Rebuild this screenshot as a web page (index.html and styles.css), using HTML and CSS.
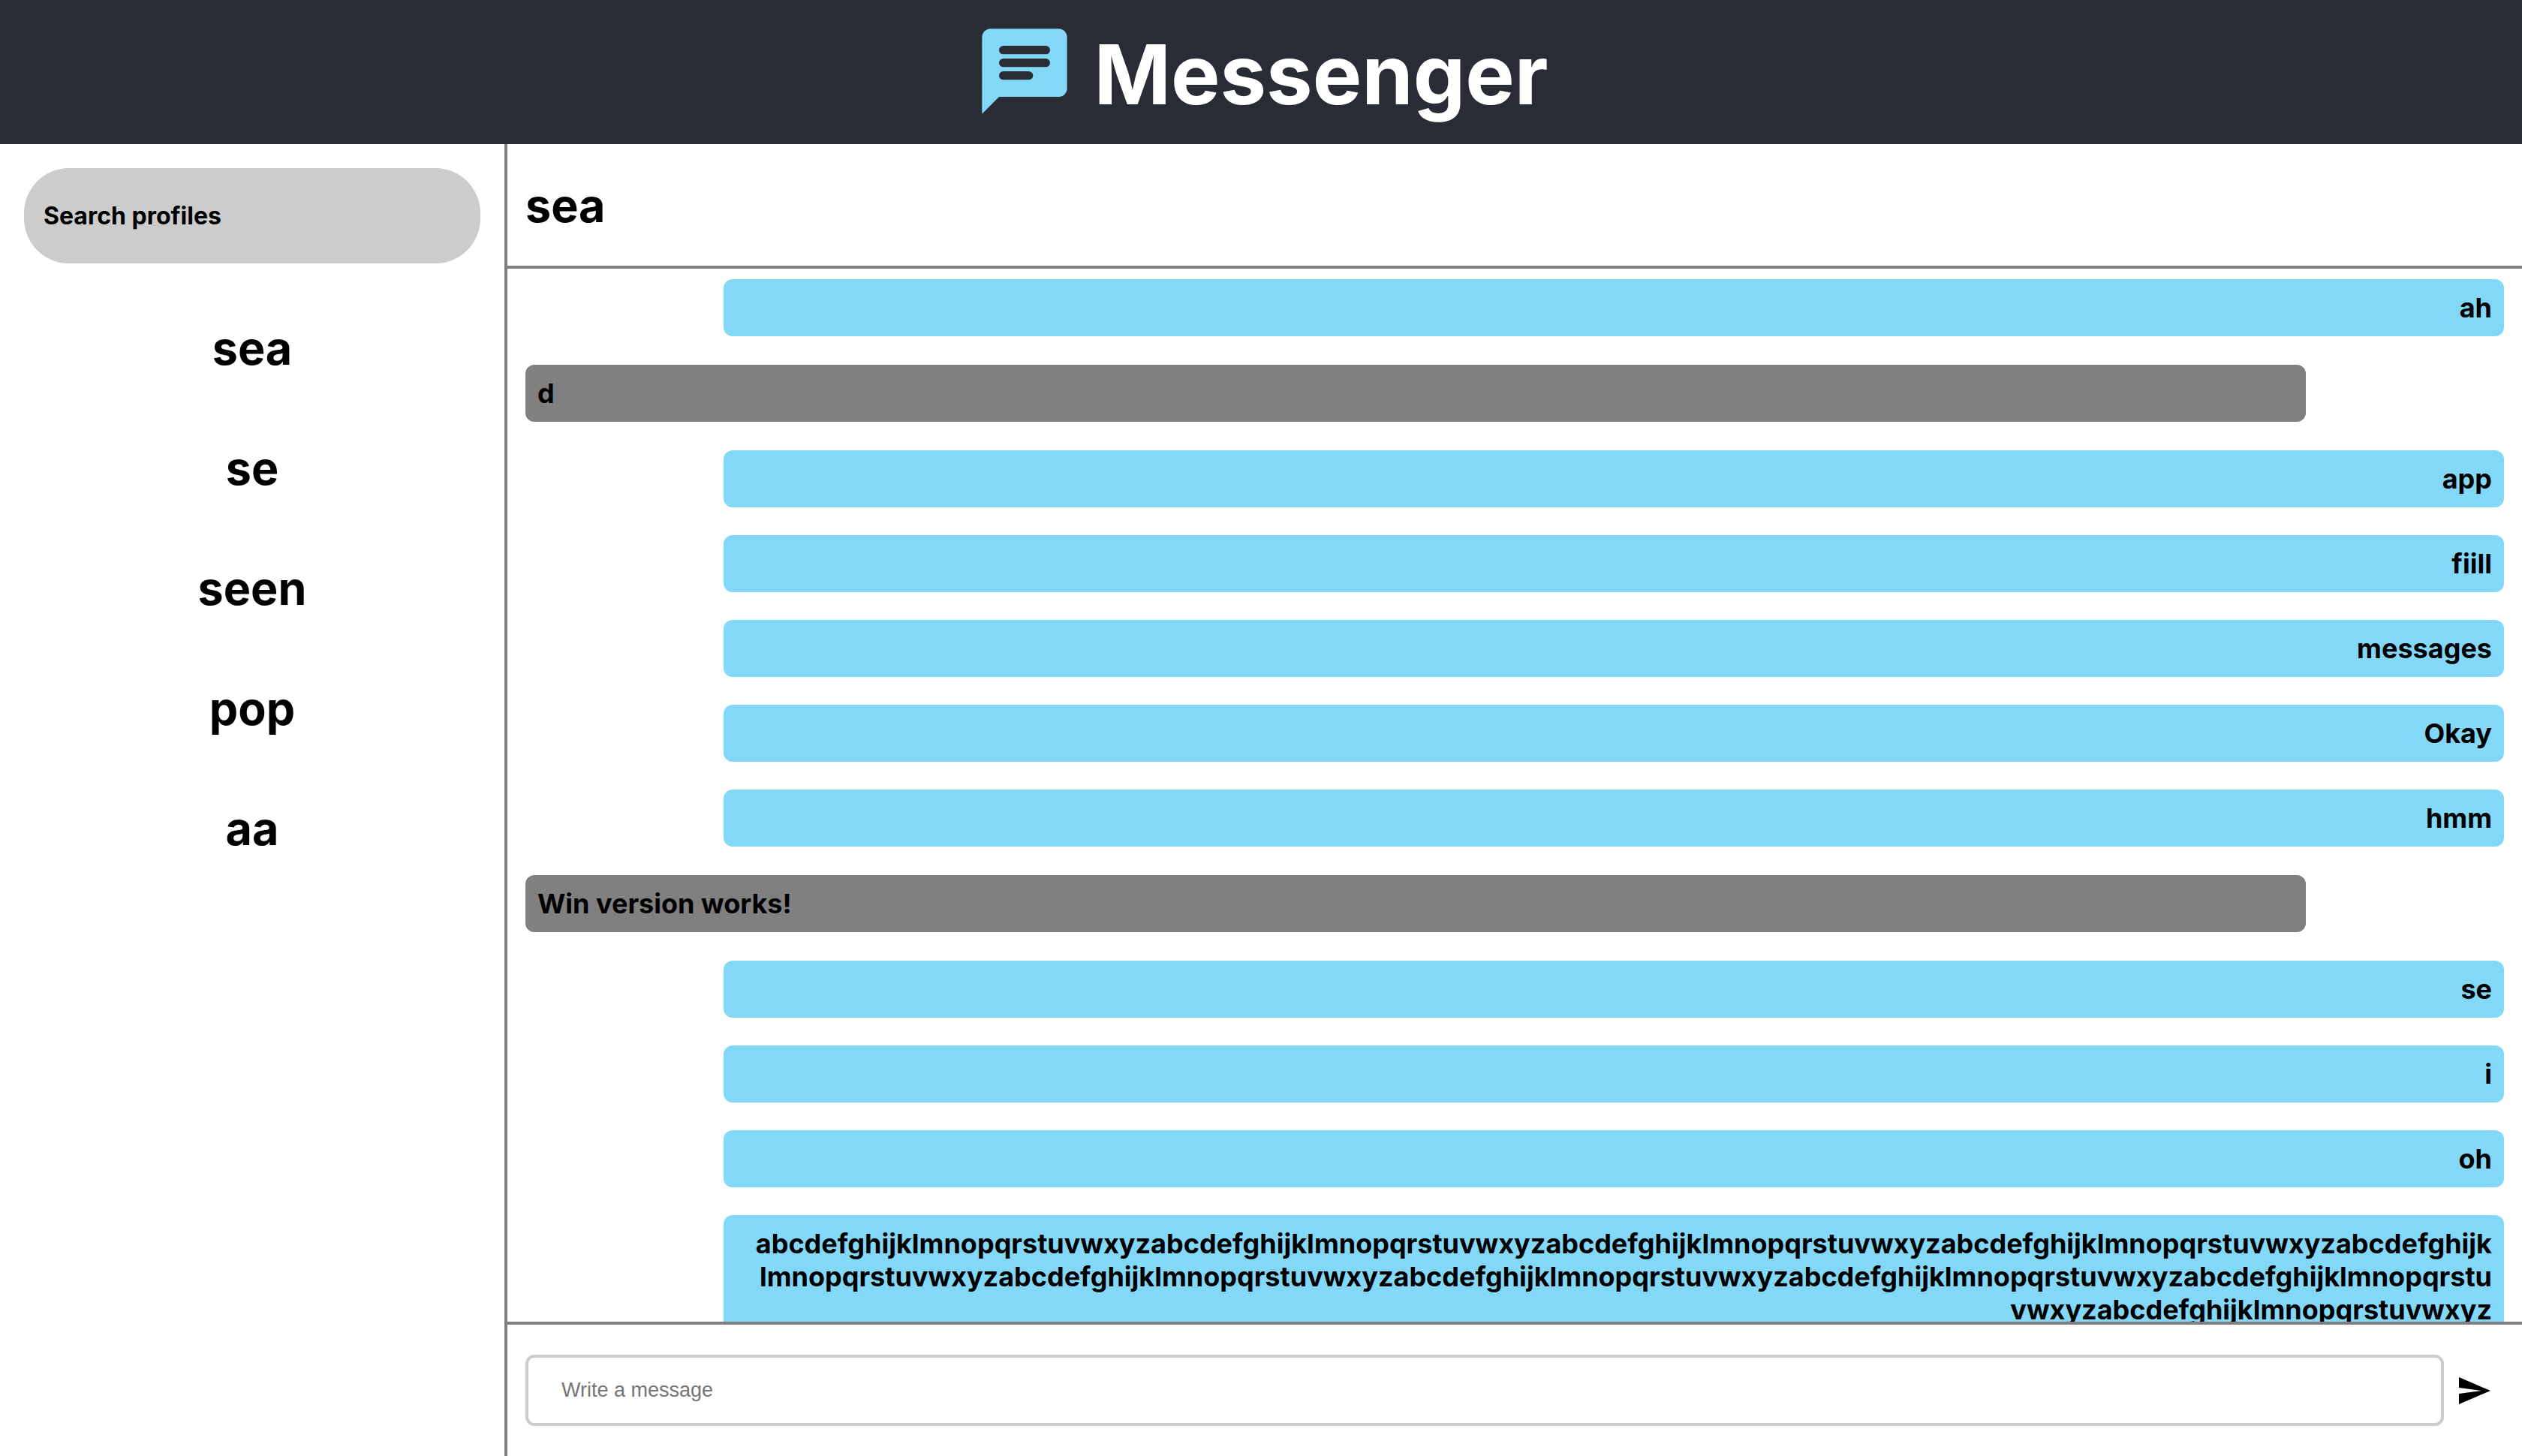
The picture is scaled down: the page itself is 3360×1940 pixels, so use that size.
FILE: index.html
```html
<!DOCTYPE html>
<html lang="en">
<head>
  <meta charset="utf-8">
  <meta name="viewport" content="width=device-width, initial-scale=1">
  <title>Messenger</title>
  <link rel="stylesheet" href="styles.css">
</head>
<body>
  <header class="app-header">
    <svg class="app-logo" viewBox="0 0 24 24" aria-hidden="true">
      <path fill="currentColor" fill-rule="evenodd" d="M20 2H4c-1.1 0-2 .9-2 2v18l4-4h14c1.1 0 2-.9 2-2V4c0-1.100-.9-2-2-2zM7 6h10a1 1 0 0 1 0 2H7a1 1 0 0 1 0-2zM7 9h10a1 1 0 0 1 0 2H7a1 1 0 0 1 0-2zM7 12h6a1 1 0 0 1 0 2H7a1 1 0 0 1 0-2z"/>
    </svg>
    <h1 class="app-title">Messenger</h1>
  </header>
  <div class="app-body">
    <aside class="sidebar">
      <input class="search" type="search" placeholder="Search profiles" aria-label="Search profiles">
      <nav class="profiles">
        <a class="profile" href="#sea">sea</a>
        <a class="profile" href="#se">se</a>
        <a class="profile" href="#seen">seen</a>
        <a class="profile" href="#pop">pop</a>
        <a class="profile" href="#aa">aa</a>
      </nav>
    </aside>
    <main class="chat">
      <h2 class="chat-title">sea</h2>
      <div class="messages">
        <p class="message sent">ah</p>
        <p class="message received">d</p>
        <p class="message sent">app</p>
        <p class="message sent">fiill</p>
        <p class="message sent">messages</p>
        <p class="message sent">Okay</p>
        <p class="message sent">hmm</p>
        <p class="message received">Win version works!</p>
        <p class="message sent">se</p>
        <p class="message sent">i</p>
        <p class="message sent">oh</p>
        <p class="message sent">abcdefghijklmnopqrstuvwxyzabcdefghijklmnopqrstuvwxyzabcdefghijklmnopqrstuvwxyzabcdefghijklmnopqrstuvwxyzabcdefghijklmnopqrstuvwxyzabcdefghijklmnopqrstuvwxyzabcdefghijklmnopqrstuvwxyzabcdefghijklmnopqrstuvwxyzabcdefghijklmnopqrstuvwxyzabcdefghijklmnopqrstuvwxyz</p>
      </div>
      <form class="composer">
        <input class="composer-input" type="text" placeholder="Write a message" aria-label="Write a message">
        <button class="send" type="button" aria-label="Send">
          <svg class="send-icon" viewBox="0 0 24 24" aria-hidden="true">
            <path fill="currentColor" d="M2.010 21L23 12 2.010 3 2 10l15 2-15 2z"/>
          </svg>
        </button>
      </form>
    </main>
  </div>
</body>
</html>
```
FILE: styles.css
```css
* {
  box-sizing: border-box;
}

body {
  margin: 0;
  height: 100vh;
  display: flex;
  flex-direction: column;
  background: #fff;
  color: #000;
  font-family: Inter, "Liberation Sans", sans-serif;
  font-weight: 700;
}

.app-header {
  flex: none;
  display: flex;
  align-items: center;
  justify-content: center;
  gap: 24px;
  height: 192px;
  padding-bottom: 2px;
  background: #292c35;
  color: #fff;
}

.app-logo {
  width: 136px;
  height: 136px;
  color: #83d7f7;
}

.app-title {
  margin: 0;
  padding-top: 8px;
  font-size: 110px;
  line-height: 144px;
}

.app-body {
  flex: 1;
  min-height: 0;
  display: flex;
}

.sidebar {
  flex: none;
  width: 20%;
  padding: 32px;
}

.search {
  display: block;
  width: 100%;
  height: 127px;
  padding: 0 26px;
  border: 0;
  border-radius: 60px;
  background: #ccc;
  font: inherit;
  font-size: 32px;
}

.search::placeholder {
  color: #000;
  opacity: 1;
}

.profiles {
  display: flex;
  flex-direction: column;
  margin-top: 33px;
}

.profile {
  color: inherit;
  font-size: 61px;
  line-height: 160px;
  text-align: center;
  text-decoration: none;
}

.chat {
  flex: 1;
  min-width: 0;
  display: flex;
  flex-direction: column;
  border-left: 4px solid #808080;
}

.chat-title {
  flex: none;
  margin: 0;
  padding: 2px 24px 0;
  border-bottom: 4px solid #808080;
  font-size: 61px;
  line-height: 160px;
}

.messages {
  flex: 1;
  min-height: 0;
  overflow: hidden;
  display: flex;
  flex-direction: column;
  gap: 37px;
  padding: 14px 24px;
}

.message {
  flex: none;
  width: 90%;
  margin: 0;
  padding: 16px;
  border-radius: 12px;
  font-size: 36px;
  line-height: 44px;
  overflow-wrap: anywhere;
}

.sent {
  align-self: flex-end;
  padding-left: 36px;
  background: #83d7f7;
  text-align: right;
}

.received {
  align-self: flex-start;
  margin: 1px 0;
  background: #808080;
}

.composer {
  flex: none;
  display: flex;
  align-items: center;
  gap: 16px;
  padding: 40px 40px 40px 24px;
  border-top: 4px solid #808080;
}

.composer-input {
  flex: 1;
  min-width: 0;
  height: 95px;
  padding: 0 44px;
  border: 4px solid #ccc;
  border-radius: 12px;
  font-family: "Liberation Sans", Arial, sans-serif;
  font-size: 27px;
}

.composer-input::placeholder {
  color: #757575;
}

.send {
  flex: none;
  padding: 0;
  border: 0;
  background: none;
  color: #000;
}

.send-icon {
  display: block;
  width: 48px;
  height: 48px;
}
```
